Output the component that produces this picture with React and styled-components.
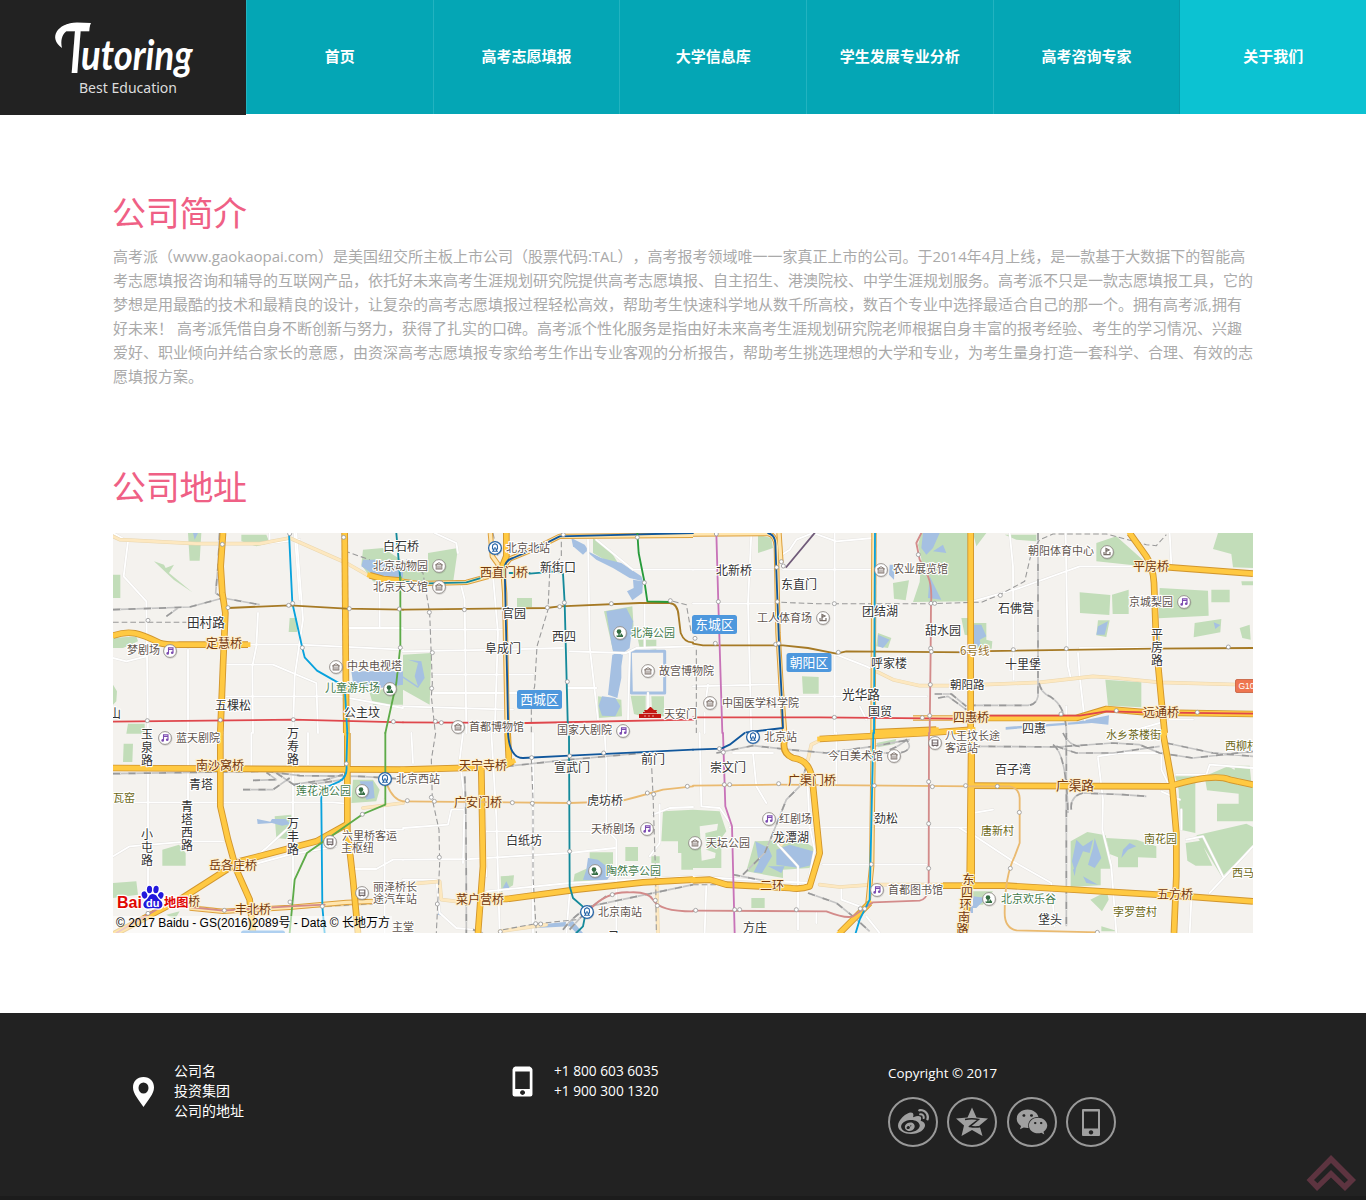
import React from 'react';
import styled, { createGlobalStyle } from 'styled-components';
import { FaWeibo, FaWeixin } from 'react-icons/fa';

const GlobalStyle = createGlobalStyle`
  * { box-sizing: border-box; }
  body {
    margin: 0;
    background: #fff;
    font-family: "Open Sans", "Noto Sans CJK SC", sans-serif;
    text-spacing-trim: space-all;
  }
`;

const Page = styled.div`
  width: 1366px;
  height: 1200px;
  overflow: hidden;
  display: flex;
  flex-direction: column;
`;

const Header = styled.header`
  display: flex;
  height: 115px;
  flex: none;
`;

const Logo = styled.div`
  width: 246px;
  height: 115px;
  background: #222;
  svg { display: block; }
`;

const Nav = styled.nav`
  flex: 1;
  display: grid;
  grid-template-columns: repeat(6, 1fr);
  height: 114px;
`;

const NavItem = styled.a`
  display: flex;
  align-items: center;
  justify-content: center;
  color: #fff;
  font-size: 15px;
  font-weight: 700;
  padding-bottom: 4px;
  background: ${(p) => (p.$active ? '#0cc2d2' : '#04a6b5')};
  border-left: 1px solid ${(p) => (p.$active ? '#0799a8' : '#22b3c0')};
`;

const Main = styled.main`
  width: 1140px;
  margin: 0 auto;
  padding-top: 73px;
  flex: none;
  height: 898px;
`;

const Title = styled.h2`
  margin: 0 0 0 -1px;
  font-size: 34px;
  line-height: 50px;
  font-weight: 400;
  letter-spacing: -0.3px;
  color: #ef6085;
`;

const Intro = styled.div`
  margin: 6px 0 74px;
  color: #aaa;
  font-size: 15px;
  line-height: 24px;
`;

const Line = styled.div`
  width: ${(p) => p.$w}px;
  white-space: nowrap;
  text-align-last: ${(p) => (p.$last ? 'left' : 'justify')};
`;

const MapFrame = styled.div`
  margin-top: 21px;
  height: 400px;
  svg { display: block; }
`;

const Footer = styled.footer`
  flex: 1;
  background: #222;
  border-bottom: 4px solid #1c1c1c;
  color: #fff;
  font-size: 14px;
  line-height: 20px;
  display: grid;
  grid-template-columns: 380px 376px 1fr;
  padding: 48px 0 0 132px;
`;

const Contact = styled.div`
  display: flex;
  gap: ${(p) => p.$gap}px;
  svg { flex: none; margin-top: ${(p) => p.$top}px; }
`;

const Lines = styled.div`
  font-size: ${(p) => p.$size}px;
  font-weight: ${(p) => p.$weight || 400};
  white-space: pre-line;
`;

const Social = styled.div`
  display: flex;
  gap: 9.3px;
  margin-top: 14px;
`;

const Copy = styled.div`
  font-size: 13.4px;
  margin-top: 2px;
`;

const Round = styled.a`
  width: 50px;
  height: 50px;
  border: 2px solid #999;
  border-radius: 50%;
  color: #a0a0a0;
  display: flex;
  align-items: center;
  justify-content: center;
`;

const ToTop = styled.a`
  position: fixed;
  left: 1306px;
  top: 1155px;
  line-height: 0;
`;

const TILES = [
  {
    x: 113, y: 533,
    park: ['M225 0h40l-5 83h-30zM385 5h75l10 25-40 10-45-15z', 'M123 85l30 10 5 10 25-10-15 25 70 58-55-37z', 'M0 125h22v70H0zM0 315l70-5 5 15-45 20H0zM530 255h22v42h-25z', 'M0 455l12 20-2 30-10 10zM750 50l60-5 60 40v80l-90-20-35-50zM770 480l100-30v65h-90zM45 572h50v30H40z'],
    water: ['M750 80l50 0 70 30v30l-80-10-45-30zM715 415h155v40l-70 10-80-15zM240 0h15l-10 20z'],
    minor: ['M0 0L45 25 32 130 100 205 105 600M225 350V600M435 240L430 340 418 400 420 600M550 0L570 260 545 430 540 600M330 395H480L610 450 615 600M340 490H680L870 525M400 335H560L870 350M710 285H870M800 160V285M0 375L40 385 100 370', 'M470 0V30L560 20M545 0L560 200'],
    tan: ['M0 10L20 20 250 32 440 32 530 15 700 90 770 130'],
    rail: ['M0 230L230 222 330 195 440 215M160 250L195 225', 'M320 0L315 100 308 180 330 195'],
    dash: ['M0 268L220 268', 'M695 0L697 55 770 80'],
    major: ['M330 0L323 100 328 180 337 240 330 400 322 600', 'M0 308C50 290 80 300 140 330Q160 336 200 335H405', 'M695 0L700 600', 'M770 127L810 138 865 143'],
    metro: [['#df474c', 'M0 566L540 560 870 568'], ['#08a2dd', 'M528 0L538 210 568 345 575 373 612 413 695 460 703 600'], ['#148a9b', 'M850 0L862 140'], ['#5dab48', 'M862 130V340L850 450 817 600'], ['#a67a25', 'M345 225L530 217 700 227 870 230']],
    dots: [[328, 34], [345, 224], [527, 217], [539, 211], [709, 227], [568, 344], [862, 344], [105, 262], [103, 563], [322, 561], [541, 560], [841, 566], [530, 2], [692, 13], [859, 228]],
  },
  {
    x: 403, y: 533,
    park: ['M0 85L75 85 75 60 165 45 150 150H0z', 'M570 15l50 35 25 40-40-10-35-20zM342 195h45v27h-45zM603 235l85-15 5 80-60 65zM705 320h55v30l-50-5z', 'M0 365l85-5-5 155-80-45zM683 488h45v65l-35-10zM745 490h38v60h-35zM585 490l70 10 2 50-70 5z'],
    water: ['M505 15l40 20 10 15-15 15-30-25z', 'M545 50l50 25 60 15 60 40 5 15-40-10-50-30-50-25z', 'M690 140l30 5-2 35-30 22-16-27 20-10z', 'M610 235l60-10 20 40-10 80-45 35-10-50z', 'M628 365h32l-5 35 0 35-12 60-28-10z', 'M597 490l40 5 15 25-15 30-40-2-10-30z', 'M0 430l45 30-10-30 10-40-30-10 40 5 10 50-20 30-45-30z'],
    ring: ['M682 355H785V480H685z'],
    minor: ['M95 0L160 30 165 60M175 160L185 200 190 600M270 130L285 300 275 600M0 290H300M90 425H390M90 480H390M0 355L290 350 480 345M500 355L670 360 700 345 870 340M555 20L560 340 585 560M580 20L690 110H870M680 355L675 560M725 210V340M0 520L330 530M490 465H580M735 480V550'],
    rail: [],
    dash: ['M10 80L60 120 80 240 88 450 85 490 97 600M270 0L285 70M475 0V70L440 120 435 230 402 340 395 460 385 500V600M810 205L850 215 865 300'],
    major: ['M310 0V70L298 100'],
    casing: ['M262 0L268 70 300 115 305 180 313 600', 'M870 7L470 10 400 45 320 78 303 100', 'M0 145L50 152 190 148 300 118'],
    metro: [['#df474c', 'M0 568L370 570 870 560'], ['#a67a25', 'M0 230L430 225 470 220 710 210 800 210Q825 212 827 250L833 300Q845 330 870 328'], ['#148a9b', 'M0 145L50 152 190 148 250 130M320 120H380M380 122L460 115 480 122 485 210 495 600'], ['#10579c', 'M316 600L305 100Q310 80 330 75L400 45 470 10 870 0'], ['#279b3b', 'M703 0L707 60 725 150 733 205 800 207']],
    dots: [[79, 238], [184, 230], [433, 224], [470, 221], [484, 209], [625, 212], [802, 203], [724, 149], [88, 359], [86, 466], [493, 446], [97, 565], [115, 569], [481, 5], [703, 13]],
  },
  {
    x: 693, y: 533,
    park: ['M195 5l40 10 5 30-45 15zM685 0h145l-5 205-165 2 20-60 5-70-10-40z', 'M600 150l48-8-10 60-35-5zM555 300l40 15-10 30-35-5zM327 430l50 2v50h-47zM805 255h35v55l-25-5z'],
    water: ['M690 0l50 0-20 45-20 20-15-20zM590 95l15 0-2 45-15-15zM750 35l-30 20 40 5zM555 305l35 15-20 25-15-5zM710 130l35 70-40-5z'],
    minor: ['M175 0L165 210 175 600M0 110H240M270 110H540M0 212H240M425 0V600M260 70L290 50 310 20 360 0 430 25 540 15M0 460L200 455H260M270 490H700M430 365L520 400 560 420M45 455L40 490M35 540V600M500 520L520 560'],
    tan: ['M550 415L600 440 680 458 770 458'],
    rail: ['M725 483H775L820 520M735 495L765 490 820 530'],
    dash: ['M265 208L370 212 720 212 840 208M10 350V600'],
    major: ['M833 0V600', 'M540 598L730 590'],
    casing: ['M0 3L225 2Q247 5 250 40L255 300 265 470 275 600', 'M258 0L264 90', 'M543 0L540 600', 'M660 555H780'],
    metro: [['#df474c', 'M0 553L380 553 780 557'], ['#a67a25', 'M0 332L30 337H240L270 337 345 345 430 362 460 355 840 358'], ['#c873b8', 'M70 0L76 210 88 600'], ['#10579c', 'M225 0Q245 5 247 30L258 330 266 490 270 585 160 598'], ['#08a2dd', 'M546 0L543 600'], ['#d38b8a', 'M685 0L670 30 680 80 705 130Q718 160 714 212L713 350 710 600'], ['#705b79', 'M365 0L280 102']],
    dots: [[70, 3], [76, 206], [67, 331], [248, 334], [257, 331], [253, 206], [251, 103], [265, 86], [271, 99], [424, 212], [436, 358], [676, 65], [714, 211], [725, 211], [713, 346], [715, 356], [712, 455], [710, 548], [688, 554], [424, 553], [6, 316]],
  },
  {
    x: 973, y: 533,
    park: ['M95 5h95v20l-60-5zM0 0h40l-30 40zM370 30l60-20 90 80-10 10-140-15zM735 0h105v105l-60-2-5-40-55-15z', 'M320 178l92 8-3 60-88-6zM417 185l50-15v73h-48zM560 165l145 8 2 75-150 8zM715 170h55v38l-55 0zM805 145h35v12h-33z', 'M375 262l35 0-10 50-30-5zM665 270l80-12-3 40-80 15zM800 285l30-10 3 45-25-5zM397 440l108 8v75l-100-5zM0 270l40 0 0 50 18 5-2 22-56 0z'],
    water: ['M0 275l25 0 15 35-20 10 5 25-25-15zM375 280l30-15-10 40-25 0zM722 268l20 8-15 12zM98 582l210-15 100-20-2 28-50-5-258 20z'],
    minor: ['M110 0L120 100 122 440M278 0L285 400 292 430M0 205L140 165 320 100H490M590 0L595 95M315 360L320 430 335 560M280 520V600M320 345H540', 'M490 590L560 570M590 560H660'],
    tan: ['M30 455L200 448 360 430 430 435 560 448 840 456'],
    rail: ['M195 0V490Q190 515 165 517H0', 'M198 450Q205 480 230 490 280 520 280 600'],
    dash: ['M0 208H25L80 185 155 145 175 60 200 20 240 3 400 3 520 35 550 38 580 5'],
    major: ['M470 0L520 70Q540 100 543 150L550 340 565 500 575 600', 'M550 100L840 122', 'M0 555H310L400 528 520 538 840 543'],
    metro: [['#a67a25', 'M0 355L540 347 840 345'], ['#df474c', 'M0 548H320L400 535 520 538 840 542']],
    dots: [[82, 187], [121, 350], [280, 347], [766, 342], [264, 543], [430, 533], [673, 538]],
  },
  {
    x: 113, y: 733,
    park: ['M32 32h28l-2 55h-28zM148 350l50-15 20 25v38l-70 0zM0 450l70-5 5 40-75 10zM485 250l50-5 5 75-50-5zM720 140l60 0 20 30-10 35-75 5zM160 545l40-10-15 25z'],
    water: ['M432 258l40 8 5-8 40 0 15 15-25 5-30-8-43 3zM740 145l40 0 5 50-25 5z'],
    minor: ['M105 0V540M225 0V350M540 90V520M0 208H660L700 212M415 0V100M0 370L50 340 230 325 330 325M380 410L460 345 520 290M400 400L530 365 670 340M725 408H790L840 380H870M815 290H870M585 0V95M815 200V600'],
    tan: ['M230 520L330 533 530 523 780 510M870 210L750 225M0 600L105 545'],
    rail: ['M0 122L460 115 560 128 740 130 870 138M390 170H480L530 135M420 142L490 140 460 118M490 120L550 160M540 155L640 140 690 125M590 155L690 140'],
    dash: ['M640 520L780 512'],
    major: ['M322 0V220L345 320 370 410 410 500 420 600', 'M703 0L703 290 720 440 735 600', 'M0 105L870 110', 'M0 605L200 500 380 385 610 325 700 275'],
    casing: ['M230 525L330 535 530 523 700 508 780 505'],
    metro: [['#08a2dd', 'M703 0L700 95Q705 130 680 145L635 165Q623 180 625 210L628 520 635 600'], ['#5dab48', 'M817 0V215L750 243 582 360 545 440 530 600'], ['#eaba70', 'M822 155Q840 200 870 205'], ['#d38b8a', 'M10 600L105 545 180 500M230 522L330 533 530 520 635 515']],
    dots: [[700, 92], [748, 244], [531, 507], [628, 520], [334, 532], [105, 541]],
  },
  {
    x: 403, y: 733,
    park: ['M780 235l90-5v95h-95zM825 325h45v85l-35 0v-50l-10 0zM667 342h38v42h-38zM560 358l70 0 0 40-40 50-80 5 5-30 45-20zM293 430l40-3-3 30-35 20zM745 370h25v20h-25z'],
    water: ['M555 375l30 5 45 35-20 30-70-5 10-30zM310 445l10 20-25 8zM105 520l15 30-15-5zM400 575l110-10 30 35-20 0-20-20-100 5z'],
    minor: ['M25 0L30 90M265 0L280 250 290 600M605 0L610 90V290L640 320V590M250 295H640M0 380L200 378 500 360 635 345M0 285L135 275 145 230 180 230M245 230L250 430M750 245L800 225 870 222M770 215V330L740 370M180 0L170 80 185 200 180 390M0 440L100 440 110 540 160 585 210 590M500 480L490 600M250 475L500 450 870 430M390 0V600'],
    tan: ['M0 455L110 445 115 500 160 505M760 430L765 600M290 595L430 575'],
    rail: ['M310 100L500 80 720 60M185 130Q190 200 190 600M480 590Q510 550 560 520L870 455M500 590Q560 520 610 490M210 590L240 600'],
    dash: ['M98 0L85 80 88 200 108 290 110 390 100 600M385 75L390 200 390 430 400 600M745 80L750 185 758 430 760 600M300 590L400 572 520 560'],
    major: ['M0 110L240 103', 'M300 100L330 85', 'M314 0L318 88', 'M235 110L240 400 225 600', 'M235 498H310L520 470 720 448 870 440'],
    metro: [['#eaba70', 'M0 205L500 210 650 205 700 192 780 170 870 160'], ['#148a9b', 'M498 0L500 460 510 495 550 530 540 580 520 600'], ['#10579c', 'M315 0Q320 75 360 75L500 68 870 50'], ['#d38b8a', 'M560 530Q610 475 680 478 735 475 750 500 770 535 870 535']],
    dots: [[386, 74], [500, 69], [602, 60], [13, 203], [85, 193], [94, 205], [328, 209], [388, 211], [498, 209], [733, 180], [752, 184], [853, 160], [500, 355], [109, 373], [103, 513], [398, 572], [413, 573], [628, 485], [757, 502], [763, 518], [292, 596]],
  },
  {
    x: 693, y: 733,
    park: ['M0 230l80 5 20 60-15 20v90H0zM185 325l140-5 40 25-15 60-80 5v25l-110-20zM175 495h40v30h-40zM550 30l60-12-5 15-50 10z'],
    water: ['M187 325l40 20 10 25-30 50-25-2 15-30zM250 350l40-15 70 20 0 40-40 10-70-10zM225 400l50 0-10 20zM820 500l20 20v20h-20z'],
    hole: ['M20 280l55-8-3 20-35 8 3 50 28 10-2 15-40 8z'],
    minor: ['M20 0L25 220M25 220L80 225 115 275M180 60L190 160 220 210M0 430L160 440 350 450M110 283H840M390 395H700M255 335L315 400V590M445 460V500L500 520M40 455L35 600M370 540V570M120 60H240M340 80L350 280 365 350 345 450M430 0V150M560 600L520 550M800 285L840 310'],
    tan: ['M345 80L355 35 385 20M380 455L440 462 540 455H750M265 335L285 310'],
    rail: ['M70 60L180 38 290 50 400 60 540 40 650 20M150 425L215 360 240 300 280 200 320 160 340 100M590 50Q620 40 640 20 665 50 620 60L540 60', 'M345 480L430 510 480 550 530 595M120 425L250 450'],
    dash: ['M0 455H110'],
    major: ['M275 20Q265 60 300 75 350 80 358 140L380 360 350 460Q325 470 290 465L100 455 50 440 0 442', 'M380 18L700 0 840-10', 'M835 0L830 440 815 600', 'M750 458H840', 'M440 600L530 510'],
    casing: ['M541 0L536 400 525 510'],
    metro: [['#eaba70', 'M0 158L250 155 840 160'], ['#c873b8', 'M90 0L97 220 117 280 125 600'], ['#10579c', 'M0 50L85 47 110 35 155 0'], ['#d38b8a', 'M708 0L707 470Q700 500 680 503L540 508 480 550Q460 558 400 535L0 533'], ['#08a2dd', 'M541 0L530 500 500 560 488 600']],
    dots: [[79, 47], [91, 58], [94, 155], [110, 155], [257, 152], [544, 158], [535, 394], [707, 146], [718, 161], [707, 272], [707, 406], [818, 158], [8, 532], [125, 530], [140, 530], [310, 530], [502, 527], [515, 527]],
  },
  {
    x: 973, y: 733,
    park: ['M607 130h60v170l-45-10-5-120zM695 130l70-30 27 15 0 40 48 0v110H732v-53l65 0v-30l-95-10zM785 98h45l5 50-50-15z', 'M293 325l50-28 55 10 20 100-35 0 0 50-90 5zM400 315l90 5 60 20v35l-55-2 0 30-60 0 0-30-25-10zM638 330l45-7 35 75-50 0-25-15zM670 307l150-35 20 10v55l-93 95z', 'M352 500l50-25 5 25-20 35zM0 475h60l-30 40H0zM385 580l50 15h-50z'],
    water: ['M310 320l20 20 30-20-10 40-20-5-25 60-8-30zM365 315l20 60-20 30-20-10 15-50zM330 430l45 25-35-5zM310 400l-5 30-5-20zM450 350l20-20 20 10-25 10-20 25zM0 490l40 5-30 30H0z'],
    minor: ['M0 305L120 385 235 450 245 580M375 75L390 200 388 290 415 400 430 600M375 70L440 60H565V110L590 160M565 175L620 200M640 320L690 310 750 430M840 340L710 480M655 500L650 600M610 125H700L710 95 840 105M0 240L60 230M625 230V290'],
    rail: ['M0 40L250 42 420 30 500 35 560 60 660 75 840 55M280 0V580M240 35Q280 60 285 240M250 40L310 60 420 60 560 40M580 30L720 60 840 70', 'M295 230Q290 190 330 180L450 185 520 190M270 0Q290 40 320 40'],
    major: ['M570 0L597 150 610 300 610 430 603 600', 'M0 158L590 160Q720 120 770 140L840 155', 'M0 458H100L640 490 840 505', 'M-4 0V460'],
    metro: [['#eaba70', 'M0 160H110Q138 165 140 195V330L125 370Q95 430 95 540 95 585 130 592L375 598']],
    dots: [[73, 160], [139, 238], [112, 406], [373, 598]],
  },
];

/* [x, baseline, text, kind, size] */
const LABELS = [
  [383, 551, '白石桥', 'n'], [506, 552, '北京北站', 'p'], [373, 570, '北京动物园', 'p'], [373, 591, '北京天文馆', 'p'],
  [480, 577, '西直门桥', 'b'], [540, 572, '新街口', 'n'], [187, 627, '田村路', 'n', 12.6], [206, 648, '定慧桥', 'b'], [127, 654, '梦剧场', 'p'],
  [502, 618, '官园', 'n'], [485, 653, '阜成门', 'n'], [552, 641, '西四', 'n'], [631, 637, '北海公园', 'g'], [347, 670, '中央电视塔', 'p'],
  [325, 692, '儿童游乐场', 'g'], [215, 710, '五棵松', 'n'], [344, 717, '公主坟', 'n'], [109, 718, '山', 'n', 12], [659, 675, '故宫博物院', 'p'],
  [664, 718, '天安门', 'p'], [469, 731, '首都博物馆', 'p'], [557, 734, '国家大剧院', 'p'], [176, 742, '蓝天剧院', 'p'], [716, 575, '北新桥', 'n'],
  [781, 589, '东直门', 'n'], [893, 573, '农业展览馆', 'p'], [757, 622, '工人体育场', 'p'], [862, 616, '团结湖', 'n'], [925, 635, '甜水园', 'n'],
  [871, 668, '呼家楼', 'n'], [960, 655, '6号线', 'l', 11.500], [950, 689, '朝阳路', 'n', 11.500], [842, 699, '光华路', 'n', 12.700], [868, 716, '国贸', 'n'],
  [722, 707, '中国医学科学院', 'p'], [953, 722, '四惠桥', 'b'], [1028, 555, '朝阳体育中心', 'p'], [1133, 571, '平房桥', 'b'], [998, 613, '石佛营', 'n'],
  [1129, 606, '京城梨园', 'p'], [1005, 669, '十里堡', 'n'], [1143, 717, '远通桥', 'b'], [1022, 733, '四惠', 'n'], [1106, 739, '水乡茶楼街', 'v'],
  [1225, 750, '西柳村', 'v'], [764, 741, '北京站', 'p'], [945, 740, '八王坟长途', 'p'], [945, 752, '客运站', 'p'], [828, 760, '今日美术馆', 'p'],
  [995, 774, '百子湾', 'n'], [1056, 790, '广渠路', 'b', 12.700], [196, 770, '南沙窝桥', 'b'], [189, 789, '青塔', 'n'], [113, 802, '瓦窑', 'v'],
  [396, 783, '北京西站', 'p'], [296, 795, '莲花池公园', 'g'], [459, 770, '天宁寺桥', 'b'], [554, 772, '宣武门', 'n'], [641, 764, '前门', 'n'],
  [710, 772, '崇文门', 'n'], [454, 807, '广安门桥', 'b'], [587, 805, '虎坊桥', 'n'], [788, 785, '广渠门桥', 'b'], [591, 833, '天桥剧场', 'p'],
  [779, 823, '红剧场', 'p'], [874, 823, '劲松', 'n'], [506, 845, '白纸坊', 'n'], [706, 847, '天坛公园', 'p'], [773, 842, '龙潭湖', 'n'],
  [342, 840, '六里桥客运', 'p'], [341, 852, '主枢纽', 'p'], [209, 870, '岳各庄桥', 'b'], [373, 891, '丽泽桥长', 'p'], [373, 903, '途汽车站', 'p'],
  [456, 904, '菜户营桥', 'b'], [606, 875, '陶然亭公园', 'g'], [760, 890, '二环', 'b'], [888, 894, '首都图书馆', 'p'], [598, 916, '北京南站', 'p'],
  [743, 932, '方庄', 'n'], [235, 914, '丰北桥', 'b'], [188, 906, '桥', 'b'], [392, 931, '主堂', 'p'], [981, 835, '唐新村', 'v'],
  [1144, 843, '南花园', 'v'], [1157, 899, '五方桥', 'b'], [1232, 877, '西马', 'v'], [1113, 916, '孛罗营村', 'v'], [1001, 903, '北京欢乐谷', 'g'],
  [1038, 924, '垡头', 'n'], [608, 941, '马', 'n'],
];

/* [x, first baseline, step, text, kind] */
const VERTICAL = [
  [141, 739, 13, '玉泉路', 'n'], [287, 738, 13, '万寿路', 'n'], [181, 811, 13, '青塔西路', 'n'], [141, 839, 13, '小屯路', 'n'],
  [287, 828, 13, '万丰路', 'n'], [1151, 639, 13, '平房路', 'n'],
];

const POIS = [
  [439, 566, 'm'], [439, 587, 'm'], [170, 651, 'o'], [336, 667, 'm'], [390, 689, 't'], [620, 633, 't'], [648, 671, 'm'], [458, 727, 'm'],
  [623, 731, 'o'], [165, 738, 'o'], [881, 570, 'm'], [823, 618, 'f'], [710, 703, 'm'], [1107, 552, 'f'], [1184, 602, 'o'], [362, 791, 't'],
  [330, 842, 'c'], [362, 893, 'c'], [595, 871, 't'], [647, 829, 'o'], [695, 843, 'm'], [769, 819, 'o'], [894, 756, 'm'], [935, 743, 'c'],
  [877, 890, 'o'], [989, 899, 't'], [495, 548, 's'], [385, 779, 's'], [753, 737, 's'], [587, 912, 's'],
];

const LABEL_COLOR = { n: '#333', b: '#74380c', p: '#5f554e', g: '#427a49', v: '#6c6818', l: '#96722a' };

const Label = styled.text`
  font-family: "Noto Sans CJK SC", sans-serif;
  font-size: ${(p) => p.$size}px;
  fill: ${(p) => LABEL_COLOR[p.$kind]};
  stroke: ${(p) => (p.$kind === 'b' ? '#fff0cc' : '#fff')};
  stroke-width: 2.2px;
  stroke-linejoin: round;
  paint-order: stroke;
`;

const POI_MARK = {
  m: <g fill="none" stroke="#81756e" strokeWidth="1"><path d="M-3.500-1.200L0-3.300 3.500-1.200zM-2.800-1V2.800M2.800-1V2.800M-3.300 3H3.300M-1 0V2.800M1 0V2.800" /></g>,
  o: <g fill="#7c4bb0"><path d="M-1.500 2.200V-3.200H3V1.500M-1.500-1.600H3" fill="none" stroke="#7c4bb0" strokeWidth="1.100" /><circle cx="-2.300" cy="2.400" r="1.300" /><circle cx="2.200" cy="1.800" r="1.300" /></g>,
  t: <g fill="#356e43"><circle cx="-1" cy="-1.5" r="2.3" /><path d="M-1.7 0h1.4v3h-1.4zM1 0l2.4 3H0zM-3.800 2.500H3V4h-6z" /></g>,
  f: <path d="M-1 2V-3.500L2-2-1-.5M-3 0V2.600H3V0" fill="none" stroke="#766c66" strokeWidth="1.2" />,
  c: <path d="M-2.800-3H2.800V2.300H-2.800zM-2.800 0H2.800M-1.800 2V3.600M1.800 2V3.600" fill="none" stroke="#73696a" strokeWidth="1.2" />,
  s: <path d="M-3 3.200H3M-1.500 3V1M1.500 3V1M-2.500 1H2.500V-1.500A2.500 2.500 0 0 0-2.500-1.500zM0-1V1M0-5V-4" fill="none" stroke="#2866a8" strokeWidth="1.1" />,
};

const Poi = ({ x, y, kind }) => (
  <g transform={`translate(${x} ${y})`}>
    <circle r="7" fill="#0002" cx=".5" cy=".8" />
    <circle r="6.4" fill="#fff" stroke={kind === 's' ? '#2866a8' : '#8e8984'} strokeWidth={kind === 's' ? 1.3 : 0.9} />
    {POI_MARK[kind]}
  </g>
);

const District = ({ x, y, name }) => (
  <g>
    <rect x={x} y={y} width="45" height="19" rx="2.5" fill="#4e98dd" />
    <text x={x + 3.3} y={y + 14.3} fontSize="12.8" fill="#fff" fontFamily="Noto Sans CJK SC, sans-serif">{name}</text>
  </g>
);

const Strokes = ({ of, color, width, dash, cap = 'round' }) =>
  (of || []).map((d) => (
    <path key={d} d={d} fill="none" stroke={color} strokeWidth={width} strokeDasharray={dash} strokeLinecap={cap} strokeLinejoin="round" />
  ));

const Fills = ({ of, color }) => (of || []).map((d) => <path key={d} d={d} fill={color} />);

const LAYERS = [
  (t) => <Fills of={t.park} color="#c2ddb9" />,
  (t) => <Fills of={t.hole} color="#f4f2ee" />,
  (t) => <><Fills of={t.water} color="#a5c0e2" /><Strokes of={t.ring} color="#a5c0e2" width={9} cap="butt" /></>,
  (t) => <Strokes of={t.minor} color="#e4e2df" width={8} />,
  (t) => <Strokes of={t.minor} color="#fff" width={5.5} />,
  (t) => <><Strokes of={t.tan} color="#ead6ae" width={11} /><Strokes of={t.tan} color="#fde8c0" width={8} /></>,
  (t) => <><Strokes of={t.rail} color="#c4c4c4" width={5} cap="butt" /><Strokes of={t.rail} color="#fff" width={3} dash="24 22" cap="butt" /><Strokes of={t.rail} color="#999" width={5} dash="22 24" dashoffset="22" cap="butt" /></>,
  (t) => <Strokes of={t.dash} color="#999" width={3.2} dash="17 9" cap="butt" />,
  (t) => <><Strokes of={t.casing} color="#dda03c" width={16} cap="butt" /><Strokes of={t.casing} color="#ffe6b0" width={10} cap="butt" /></>,
  (t) => <Strokes of={t.major} color="#d2962d" width={20} cap="butt" />,
  (t) => <Strokes of={t.major} color="#ffc942" width={14.5} cap="square" />,
  (t) => t.metro.map(([c, d]) => <Strokes key={d} of={[d]} color={c} width={5.5} />),
  (t) => t.dots.map(([x, y]) => <circle key={`${x}-${y}`} cx={x} cy={y} r="6" fill="#fff" stroke="#999" strokeWidth="2.5" />),
];

const CityMap = () => (
  <svg width="1140" height="400" viewBox="113 533 1140 400" overflow="hidden">
    <rect x="113" y="533" width="1140" height="400" fill="#f4f2ee" />
    {LAYERS.map((draw, i) => (
      <g key={i}>
        {TILES.map((t) => (
          <g key={`${t.x}-${t.y}`} transform={`translate(${t.x} ${t.y}) scale(.33333)`}>{draw(t)}</g>
        ))}
      </g>
    ))}
    {LABELS.map(([x, y, text, kind, size]) => (
      <Label key={`${x}-${y}`} x={x} y={y} $kind={kind} $size={size || ('pgv'.includes(kind) ? 11 : 12)}>{text}</Label>
    ))}
    {VERTICAL.map(([x, y, step, text, kind]) => (
      <Label key={`${x}-${y}`} $kind={kind} $size={12}>
        {[...text].map((c, i) => <tspan key={c} x={x} y={y + i * step}>{c}</tspan>)}
      </Label>
    ))}
    <Label $kind="b" $size={12}>
      {[...'东四环南路'].map((c, i) => <tspan key={c} x={962.5 - i * 1.5} y={884 + i * 12.5}>{c}</tspan>)}
    </Label>
    {POIS.map(([x, y, kind]) => <Poi key={`${x}-${y}`} x={x} y={y} kind={kind} />)}
    <District x={517} y={690} name="西城区" />
    <District x={692} y={615} name="东城区" />
    <District x={786.5} y={653} name="朝阳区" />
    <rect x="241" y="930.5" width="44" height="8" rx="2.5" fill="#4e98dd" />
    <path d="M639 718v-4h4v-2h2l-1-2h3l3-3h1l3 3h3l-1 2h1v2h4v4z" fill="#c31610" />
    <path d="M642 713.5h16M645 717v-2M649 717v-2M653 717v-2" stroke="#f4d7d2" strokeWidth=".7" />
    <rect x="1235.500" y="679.500" width="22" height="13" rx="1.500" fill="#ee7550" stroke="#c45c3b" strokeWidth=".8" />
    <text x="1238.500" y="689" fontSize="8.500" fill="#fff" fontFamily="Liberation Sans, sans-serif">G10</text>
    <rect x="113" y="916" width="279" height="17" fill="#fff" opacity=".55" />
    <text x="116" y="927" fontSize="12" fill="#000" textLength="274" fontFamily="Liberation Sans, Noto Sans CJK SC, sans-serif">© 2017 Baidu - GS(2016)2089号 - Data © 长地万方</text>
    <g stroke="#fff" strokeWidth="2.500" paintOrder="stroke" strokeLinejoin="round">
      <text x="117" y="907.500" fontSize="17" fontWeight="700" fill="#e10601" textLength="25" lengthAdjust="spacingAndGlyphs" fontFamily="Liberation Sans, sans-serif">Bai</text>
      <g fill="#2319dc">
        <ellipse cx="144.500" cy="895" rx="2.800" ry="3.700" transform="rotate(-15 144.500 895)" />
        <ellipse cx="149.500" cy="889.500" rx="2.600" ry="3.700" />
        <ellipse cx="156" cy="889.500" rx="2.600" ry="3.700" transform="rotate(10 156 889.500)" />
        <ellipse cx="160.700" cy="895.500" rx="2.700" ry="3.500" transform="rotate(20 160.700 895.500)" />
        <path d="M152.500 894C149 894 149 898 146 900 141 904 144 909 148 908.500L153 908 158 908.500C163 909 164 903 160 900 157 898 157 894 152.500 894z" />
      </g>
      <text x="164" y="907" fontSize="12.200" fontWeight="700" fill="#e10601" fontFamily="Noto Sans CJK SC, sans-serif">地图</text>
    </g>
    <text x="146" y="906.500" fontSize="11" fontWeight="700" fill="#fff" fontFamily="Liberation Sans, sans-serif">du</text>
  </svg>
);

const NAV = ['首页', '高考志愿填报', '大学信息库', '学生发展专业分析', '高考咨询专家', '关于我们'];

const INTRO = [
  [1131, '高考派（www.gaokaopai.com）是美国纽交所主板上市公司（股票代码:TAL），高考报考领域唯一一家真正上市的公司。于2014年4月上线，是一款基于大数据下的智能高'],
  [1140, '考志愿填报咨询和辅导的互联网产品，依托好未来高考生涯规划研究院提供高考志愿填报、自主招生、港澳院校、中学生涯规划服务。高考派不只是一款志愿填报工具，它的'],
  [1129, '梦想是用最酷的技术和最精良的设计，让复杂的高考志愿填报过程轻松高效，帮助考生快速科学地从数千所高校，数百个专业中选择最适合自己的那一个。拥有高考派,拥有'],
  [1129, '好未来！ 高考派凭借自身不断创新与努力，获得了扎实的口碑。高考派个性化服务是指由好未来高考生涯规划研究院老师根据自身丰富的报考经验、考生的学习情况、兴趣'],
  [1140, '爱好、职业倾向并结合家长的意愿，由资深高考志愿填报专家给考生作出专业客观的分析报告，帮助考生挑选理想的大学和专业，为考生量身打造一套科学、合理、有效的志'],
  [1140, '愿填报方案。'],
];

export default function App() {
  return (
    <Page lang="zh-CN">
      <GlobalStyle />
      <Header>
        <Logo>
          <svg width="246" height="115" viewBox="0 0 246 115">
            <g fill="#fff" fontFamily="Lato, sans-serif" fontWeight="700" fontStyle="italic">
              <path d="M62 48C48 38 57 23 77 22.500L91 23 89 28C75 25 58 29 62 48z" />
              <text transform="translate(64 73) scale(.66 1)" fontSize="66">T</text>
              <text transform="translate(81 70) scale(.82 1)" fontSize="42" textLength="136" lengthAdjust="spacingAndGlyphs">utoring</text>
            </g>
            <text x="79" y="93" fontSize="14" fill="#ddd" fontFamily="Noto Sans, sans-serif" textLength="98" lengthAdjust="spacingAndGlyphs">Best Education</text>
          </svg>
        </Logo>
        <Nav>
          {NAV.map((n, i) => <NavItem key={n} $active={i === 5}>{n}</NavItem>)}
        </Nav>
      </Header>
      <Main>
        <Title>公司简介</Title>
        <Intro>
          {INTRO.map(([w, text], i) => <Line key={i} $w={w} $last={i === 5}>{text}</Line>)}
        </Intro>
        <Title>公司地址</Title>
        <MapFrame><CityMap /></MapFrame>
      </Main>
      <Footer>
        <Contact $gap={19} $top={15}>
          <svg width="23" height="31" viewBox="0 0 23 31">
            <path d="M11.500 1C5 1 1 5.500 1 11.500 1 18 7 24 11.500 31 16 24 22 18 22 11.500 22 5.500 18 1 11.500 1zm0 5.500a5 5.500 0 1 1 0 11 5 5.500 0 1 1 0-11z" fill="#fff" fillRule="evenodd" />
          </svg>
          <Lines $size={14}>{'公司名\n投资集团\n公司的地址'}</Lines>
        </Contact>
        <Contact $gap={21} $top={5}>
          <svg width="21" height="31" viewBox="0 0 19.500 31" preserveAspectRatio="none">
            <path d="M3 .5H16.500Q19 2 19 3.500V28.500Q19 30.500 17 30.500H2.500Q.5 30.500.5 28.500V3.500Q1 1 3 .5zM3 5.500V23H16.500V5.500zM9.800 24.300a2.300 2.300 0 1 0 .01 0z" fill="#fff" fillRule="evenodd" />
          </svg>
          <Lines $size={13.7} $weight={500}>{'+1 800 603 6035\n+1 900 300 1320'}</Lines>
        </Contact>
        <div>
          <Copy>Copyright © 2017</Copy>
          <Social>
            <Round><FaWeibo size={31} /></Round>
            <Round>
              <svg width="34" height="34" viewBox="0 0 34 34">
                <path d="M17 2.500L21.500 12.500 33 13.500 24.500 20.500 27.500 31 17 25 6.500 31 9 20.500 1 13.500 12.500 12.500z" fill="#a0a0a0" />
                <path d="M10 14.500Q17 13 23.500 14.500L15 21.500Q20 22.500 26 21.500M23.500 14.500L14 21.800" fill="none" stroke="#222" strokeWidth="1.500" />
              </svg>
            </Round>
            <Round><FaWeixin size={32} /></Round>
            <Round>
              <svg width="18" height="27" viewBox="0 0 18 27">
                <path d="M1 0H17Q18 0 18 1V26Q18 27 17 27H1Q0 27 0 26V1Q0 0 1 0zM2 2.500V19.500H16V2.500zM9 21.200a2.200 2.200 0 1 0 .01 0z" fill="#a0a0a0" fillRule="evenodd" />
              </svg>
            </Round>
          </Social>
        </div>
      </Footer>
      <ToTop>
        <svg width="50" height="37" viewBox="0 0 50 37">
          <path d="M25 0L50 25 39 36 25 22.500 11 36 .5 25zM25 8L8 25 11.500 28.300 25 15 38.500 28.300 42 25z" fill="#5d3440" fillRule="evenodd" />
        </svg>
      </ToTop>
    </Page>
  );
}
